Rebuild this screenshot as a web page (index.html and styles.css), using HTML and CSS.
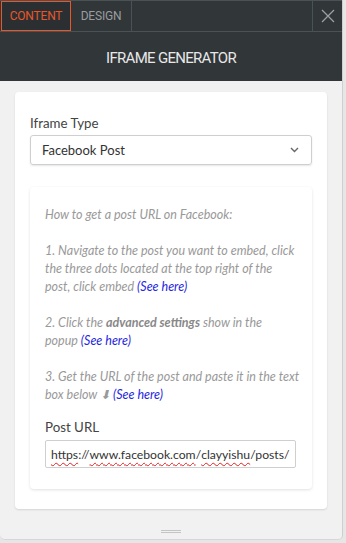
FILE: index.html
```html
<!DOCTYPE html>
<html lang="en">
<head>
    <meta charset="UTF-8">
    <meta name="viewport" content="width=device-width, initial-scale=1.0">
    <title>Iframe Generator</title>
    <link rel="stylesheet" href="styles.css">
</head>
<body>
    <div class="panel">
        <div class="tabs">
            <div class="tab active">CONTENT</div>
            <div class="tab">DESIGN</div>
            <div class="tab-fill"></div>
            <div class="close">
                <svg width="14" height="14" viewBox="0 0 14 14"><path d="M1 1L13 13M13 1L1 13" stroke="#9aa0a3" stroke-width="1.3" fill="none"/></svg>
            </div>
        </div>
        <div class="header">IFRAME GENERATOR</div>
        <div class="body">
            <div class="card">
                <label class="field-label">Iframe Type</label>
                <div class="select">
                    <span>Facebook Post</span>
                    <svg width="9" height="6" viewBox="0 0 9 6"><path d="M1 1L4.5 4.5L8 1" stroke="#666" stroke-width="1.4" fill="none"/></svg>
                </div>
                <div class="inner">
                    <p class="help">
                        How to get a post URL on Facebook:<br><br>
                        1. Navigate to the post you want to embed, click<br>
                        the three dots located at the top right of the<br>
                        post, click embed <a href="#">(See here)</a><br><br>
                        2. Click the <strong>advanced settings</strong> show in the<br>
                        popup <a href="#">(See here)</a><br><br>
                        3. Get the URL of the post and paste it in the text<br>
                        box below &#11015; <a href="#">(See here)</a>
                    </p>
                    <label class="field-label url-label">Post URL</label>
                    <div class="input"><span class="typo">https</span>://<span class="typo">www.facebook.com</span>/<span class="typo">clayyishu</span>/posts/</div>
                </div>
            </div>
            <div class="handle"></div>
        </div>
    </div>
</body>
</html>
```

FILE: styles.css
```css
body {
    margin: 0;
    padding: 0;
    background-color: #e6e6e6;
    font-family: Lato, Arial, sans-serif;
}
.panel {
    width: 343px;
    height: 540px;
    border-right: 1px solid #cfcfcf;
    border-bottom: 1px solid #d6d6d6;
    border-bottom-right-radius: 5px;
    border-bottom-left-radius: 5px;
    background-color: #f1f1f1;
    overflow: hidden;
    box-sizing: border-box;
}
.tabs {
    display: flex;
    height: 32px;
    background-color: #313639;
    border-bottom: 1px solid #4b5256;
    border-top: 1px solid #4b5256;
    box-sizing: border-box;
}
.tab {
    width: 60px;
    display: flex;
    align-items: center;
    justify-content: center;
    font-family: Roboto, sans-serif;
    font-size: 12px;
    color: #9a9d9f;
    border-right: 1px solid #4b5256;
    letter-spacing: -0.2px;
}
.tab.active {
    width: 70px;
    margin-left: 1px;
    color: #e8572a;
    border: 1px solid #e8572a;
    box-sizing: border-box;
    background-color: #2b2f32;
}
.tab-fill {
    flex: 1;
    border-right: 1px solid #4b5256;
}
.close {
    width: 29px;
    display: flex;
    align-items: center;
    justify-content: center;
}
.header {
    height: 49px;
    background-color: #313639;
    color: #e8e8e8;
    font-family: Roboto, sans-serif;
    font-size: 15px;
    letter-spacing: -0.7px;
    display: flex;
    align-items: center;
    justify-content: center;
    padding-top: 2px;
    box-sizing: border-box;
}
.body {
    padding: 11px 15px 0;
}
.card {
    background-color: #ffffff;
    border-radius: 4px;
    box-shadow: 0 1px 2px rgba(0, 0, 0, 0.12);
    padding: 23px 15px 20px;
}
.field-label {
    display: block;
    font-size: 13.3px;
    color: #444;
    margin-bottom: 4px;
}
.select {
    height: 30px;
    border: 1px solid #cfcfcf;
    border-radius: 3px;
    box-shadow: 0 1px 2px rgba(0, 0, 0, 0.1);
    display: flex;
    align-items: center;
    justify-content: space-between;
    padding: 0 12px 0 11px;
    font-size: 13px;
    color: #333;
    box-sizing: border-box;
}
.inner {
    margin-top: 22px;
    border-radius: 4px;
    box-shadow: 0 1px 3px rgba(0, 0, 0, 0.12);
    padding: 19px 16px 21px 15px;
}
.help {
    margin: 0 0 15px;
    font-size: 12.5px;
    line-height: 18px;
    font-style: italic;
    color: #999999;
    white-space: nowrap;
}
.help a {
    color: #2626e0;
    text-decoration: none;
}
.help strong {
    color: #888;
}
.url-label {
    margin-bottom: 5px;
}
.input {
    height: 28px;
    border: 1px solid #cfcfcf;
    border-radius: 2px;
    display: flex;
    align-items: center;
    padding: 0 5px;
    font-size: 12.2px;
    color: #333;
    white-space: nowrap;
    overflow: hidden;
    box-sizing: border-box;
}
.typo {
    text-decoration: underline wavy #e02020;
    text-decoration-thickness: 1px;
    text-underline-offset: 3px;
}
.handle {
    width: 20px;
    height: 1px;
    border-top: 1px solid #c4c4c4;
    border-bottom: 1px solid #c4c4c4;
    margin: 21px auto 0;
}
```
